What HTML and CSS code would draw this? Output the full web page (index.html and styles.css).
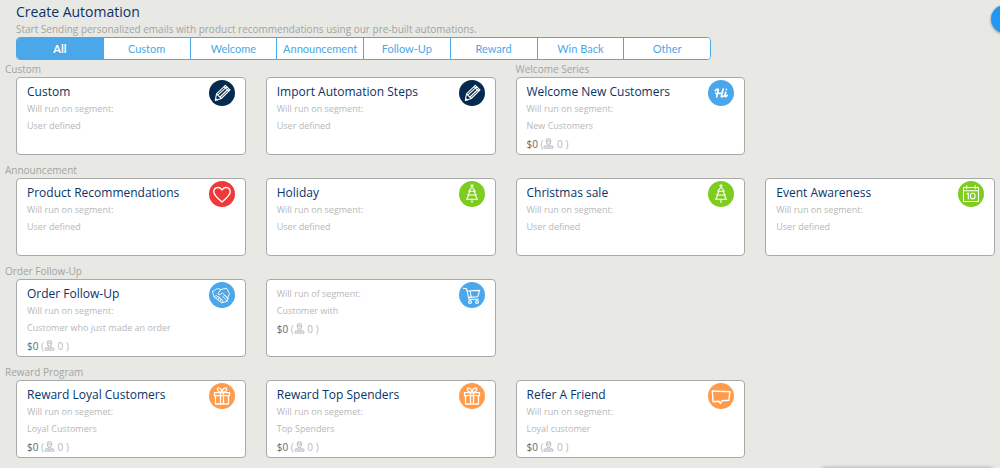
FILE: index.html
```html
<!DOCTYPE html>
<html lang="en">
<head>
<meta charset="utf-8">
<title>Create Automation</title>
<link rel="stylesheet" href="styles.css">
</head>
<body>
<svg class="defs" aria-hidden="true">
  <symbol id="pencil" viewBox="0 0 26 26"><path d="M6.300 20.500l1.200-6.700L16.300 5.300l4.700 4.500-8.700 8.700zM7.500 13.800l4.800 4.700M9 14.800l8.700-8M11 17l8.800-8.500M15 6.700l4.600 4.500M6.600 18.300l2 1.800"/></symbol>
  <symbol id="hi" viewBox="0 0 26 26"><path stroke-width="1.700" d="M7.200 10.700q1.800-2 3.100-1.300l-1.600 7.500M7.900 13.300h6.400M15.200 9l-1.900 7.600q.8.700 1.700-.4M17.700 12.300l-1 3.500q.2 1.800 2.400-.4M18.400 9.300v.3"/></symbol>
  <symbol id="heart" viewBox="0 0 26 26"><path stroke-width="1.400" d="M13 21C8 17 4.800 14.300 4.800 10.800c0-4.800 6-5.800 8.200-1.800 2.200-4 8.200-3 8.200 1.800C21.200 14.300 18 17 13 21z"/></symbol>
  <symbol id="tree" viewBox="0 0 26 26"><path d="M13 3.500v2.800M11.700 4.700h2.600M13 6l-3.300 4.300h1.600L8.600 14h1.600l-2.700 4.300h11L15.800 14h1.600l-2.700-3.700h1.600zM11.300 10.300h3.400M10.200 14h5.600M13 18.300v3.200"/></symbol>
  <symbol id="calendar" viewBox="0 0 26 26"><path d="M5.500 6.500h15v14h-15zM5.500 9.800h15M8.700 4.800v3M17.300 4.800v3M9 12.800l1.300-.8v6"/><rect x="12.500" y="12.200" width="4.500" height="5.500" rx="2"/></symbol>
  <symbol id="hands" viewBox="0 0 26 26"><path stroke-width=".9" d="M3.500 9.500l5-3 3.500 1 5.500-1.300 3 5.500-1.700 4M3.500 9.500l1.700 5.700 7.500 5.600 5.600-1.600.8-3-5.700-5.200-2.700 1.700q-2 .3-1.500-1.500L12 7.500M5.200 15.200l2-1.800 1.300 1.200-1.300 1.800M8.500 14.600l2 .5-1.500 2.600M10.500 16l1.700.7-1.200 2.400M12.400 17.500l1.600 1-1.300 2.200M13.500 14l4.700 5M15.500 13.200l3.500 3.500"/></symbol>
  <symbol id="cart" viewBox="0 0 26 26"><path d="M4.300 6.300l3.200.5L10 17.300h9.300M8.200 9l12.500-.6-2 6.400-9.200.6M11.200 9.500l.9 5.500"/><circle cx="11" cy="20" r="1.400"/><circle cx="18" cy="20" r="1.400"/></symbol>
  <symbol id="gift" viewBox="0 0 26 26"><path stroke-width="1.300" d="M5.500 9.700h15v3h-15zM6.500 12.700h13v8.300h-13zM11.500 9.700V21M14.500 9.700V21M13 9.500C10 9.500 7.500 7.500 8.500 5.500S13 6 13 9.500zM13 9.500c3 0 5.500-2 4.500-4S13 6 13 9.500z"/></symbol>
  <symbol id="bubble" viewBox="0 0 26 26"><path stroke-width="1.400" d="M4.300 8l17.700.8-1.200 8.500-6.700.4-1.800 2.800-1.200-2.200-6 .4z"/></symbol>
  <symbol id="user" viewBox="0 0 11 11"><path d="M3.300 1.300Q5.500-.3 7.700 1.300V4Q7.500 6.500 5.500 6.500T3.300 4zM3.300 3h4.400M4.500 6.300v1L1 8.300v1.900h9V8.300l-3.500-1v-1M3.500 8l2 1 2-1"/></symbol>
</svg>

<header class="header">
  <h1 class="page-title">Create Automation</h1>
  <p class="intro">Start Sending personalized emails with product recommendations using our pre-built automations.</p>
  <nav class="tabs" aria-label="Automation type">
    <button class="tab tab-active">All</button>
    <button class="tab">Custom</button>
    <button class="tab">Welcome</button>
    <button class="tab">Announcement</button>
    <button class="tab">Follow-Up</button>
    <button class="tab">Reward</button>
    <button class="tab">Win Back</button>
    <button class="tab">Other</button>
  </nav>
</header>

<main class="sections">
  <section class="row">
    <h2 class="label label-first">Custom</h2>
    <h2 class="label label-third">Welcome Series</h2>
    <article class="card"><div class="info"><h3 class="name">Custom</h3><p class="segment">Will run on segment:</p><p class="segment">User defined</p></div><svg class="icon navy"><use href="#pencil"/></svg></article>
    <article class="card"><div class="info"><h3 class="name">Import Automation Steps</h3><p class="segment">Will run on segment:</p><p class="segment">User defined</p></div><svg class="icon navy"><use href="#pencil"/></svg></article>
    <article class="card"><div class="info"><h3 class="name">Welcome New Customers</h3><p class="segment">Will run on segment:</p><p class="segment">New Customers</p><p class="stats"><span class="money">$0</span> (<svg class="user"><use href="#user"/></svg> 0 )</p></div><svg class="icon blue"><use href="#hi"/></svg></article>
  </section>

  <section class="row">
    <h2 class="label label-first">Announcement</h2>
    <article class="card"><div class="info"><h3 class="name">Product Recommendations</h3><p class="segment">Will run on segment:</p><p class="segment">User defined</p></div><svg class="icon red"><use href="#heart"/></svg></article>
    <article class="card"><div class="info"><h3 class="name">Holiday</h3><p class="segment">Will run on segment:</p><p class="segment">User defined</p></div><svg class="icon green"><use href="#tree"/></svg></article>
    <article class="card"><div class="info"><h3 class="name">Christmas sale</h3><p class="segment">Will run on segment:</p><p class="segment">User defined</p></div><svg class="icon green"><use href="#tree"/></svg></article>
    <article class="card"><div class="info"><h3 class="name">Event Awareness</h3><p class="segment">Will run on segment:</p><p class="segment">User defined</p></div><svg class="icon green"><use href="#calendar"/></svg></article>
  </section>

  <section class="row">
    <h2 class="label label-first">Order Follow-Up</h2>
    <article class="card"><div class="info"><h3 class="name">Order Follow-Up</h3><p class="segment">Will run on segment:</p><p class="segment">Customer who just made an order</p><p class="stats"><span class="money">$0</span> (<svg class="user"><use href="#user"/></svg> 0 )</p></div><svg class="icon blue"><use href="#hands"/></svg></article>
    <article class="card"><div class="info"><p class="segment">Will run of segment:</p><p class="segment">Customer with</p><p class="stats"><span class="money">$0</span> (<svg class="user"><use href="#user"/></svg> 0 )</p></div><svg class="icon blue"><use href="#cart"/></svg></article>
  </section>

  <section class="row">
    <h2 class="label label-first">Reward Program</h2>
    <article class="card"><div class="info"><h3 class="name">Reward Loyal Customers</h3><p class="segment">Will run on segemet:</p><p class="segment">Loyal Customers</p><p class="stats"><span class="money">$0</span> (<svg class="user"><use href="#user"/></svg> 0 )</p></div><svg class="icon orange"><use href="#gift"/></svg></article>
    <article class="card"><div class="info"><h3 class="name">Reward Top Spenders</h3><p class="segment">Will run on segemet:</p><p class="segment">Top Spenders</p><p class="stats"><span class="money">$0</span> (<svg class="user"><use href="#user"/></svg> 0 )</p></div><svg class="icon orange"><use href="#gift"/></svg></article>
    <article class="card"><div class="info"><h3 class="name">Refer A Friend</h3><p class="segment">Will run on segment:</p><p class="segment">Loyal customer</p><p class="stats"><span class="money">$0</span> (<svg class="user"><use href="#user"/></svg> 0 )</p></div><svg class="icon orange"><use href="#bubble"/></svg></article>
  </section>
</main>

<button class="help" aria-label="Help"></button>
<div class="dock"></div>
</body>
</html>
```
FILE: styles.css
```css
* {
  box-sizing: border-box;
}

body {
  margin: 0;
  overflow-x: hidden;
  background: #e8e9e4;
  color: #b8b8b8;
  font-family: "Open Sans", sans-serif;
  font-size: 10px;
}

h1, h2, h3, p {
  margin: 0;
  font-weight: 400;
}

.defs {
  display: none;
}

.header {
  padding: 3px 16px 0;
}

.page-title {
  color: #083468;
  font-size: 14px;
  line-height: 18px;
}

.intro {
  color: #a3a4a1;
  font-size: 10px;
  line-height: 16px;
}

.tabs {
  display: flex;
  max-width: 695px;
  height: 23px;
  overflow: hidden;
  border: 1px solid #4aa7ea;
  border-radius: 4px;
  background: #fff;
}

.tab {
  flex: 1 1 0;
  min-width: 0;
  padding: 0;
  border: 0;
  border-left: 1px solid #4aa7ea;
  background: #fff;
  color: #4aa7ea;
  font-family: Lato, sans-serif;
  font-size: 11px;
}

.tab:first-child {
  border-left: 0;
}

.tab-active {
  background: #4aa7ea;
  color: #fff;
  font-weight: 700;
}

.sections {
  display: grid;
  gap: 8px;
  padding: 2px 5px 8px 16px;
}

.row {
  display: grid;
  grid-template-columns: repeat(4, minmax(0, 1fr));
  column-gap: 20px;
}

.label {
  color: #a3a4a1;
  font-size: 10px;
  line-height: 15px;
}

.label-first {
  grid-column: 1 / 3;
  margin-left: -11px;
}

.label-third {
  grid-column: 3 / 5;
}

.card {
  display: flex;
  justify-content: space-between;
  min-height: 78px;
  padding: 5px 10px 0;
  border: 1px solid #a9a9a9;
  border-radius: 4px;
  background: #fff;
}

.card:nth-of-type(1) {
  grid-column: 1;
}

.name {
  color: #083468;
  font-size: 12px;
  line-height: 17px;
}

.segment {
  font-size: 9px;
  line-height: 17px;
}

.stats {
  font-size: 10px;
  line-height: 20px;
}

.money {
  color: #666;
}

.icon {
  flex: none;
  width: 26px;
  height: 26px;
  margin-top: -3px;
  border-radius: 50%;
  fill: none;
  stroke: #fff;
  stroke-width: 1.1;
  stroke-linecap: round;
  stroke-linejoin: round;
}

.navy { background: #042a50; }
.blue { background: #4aa7ea; }
.red { background: #ef3939; }
.green { background: #7fcc20; }
.orange { background: #ff9b4a; }

.user {
  width: 11px;
  height: 11px;
  vertical-align: -1px;
  fill: #eee;
  stroke: #c2c2c2;
  stroke-width: 1;
}

.help {
  position: fixed;
  top: 5px;
  right: -19px;
  width: 28px;
  height: 28px;
  padding: 0;
  border: 0;
  border-radius: 50%;
  background: #2196f3;
  box-shadow: 0 1px 3px #0006;
}

.dock {
  position: fixed;
  top: 100%;
  right: 8px;
  width: 170px;
  height: 40px;
  box-shadow: 0 0 4px #0005;
}
```
